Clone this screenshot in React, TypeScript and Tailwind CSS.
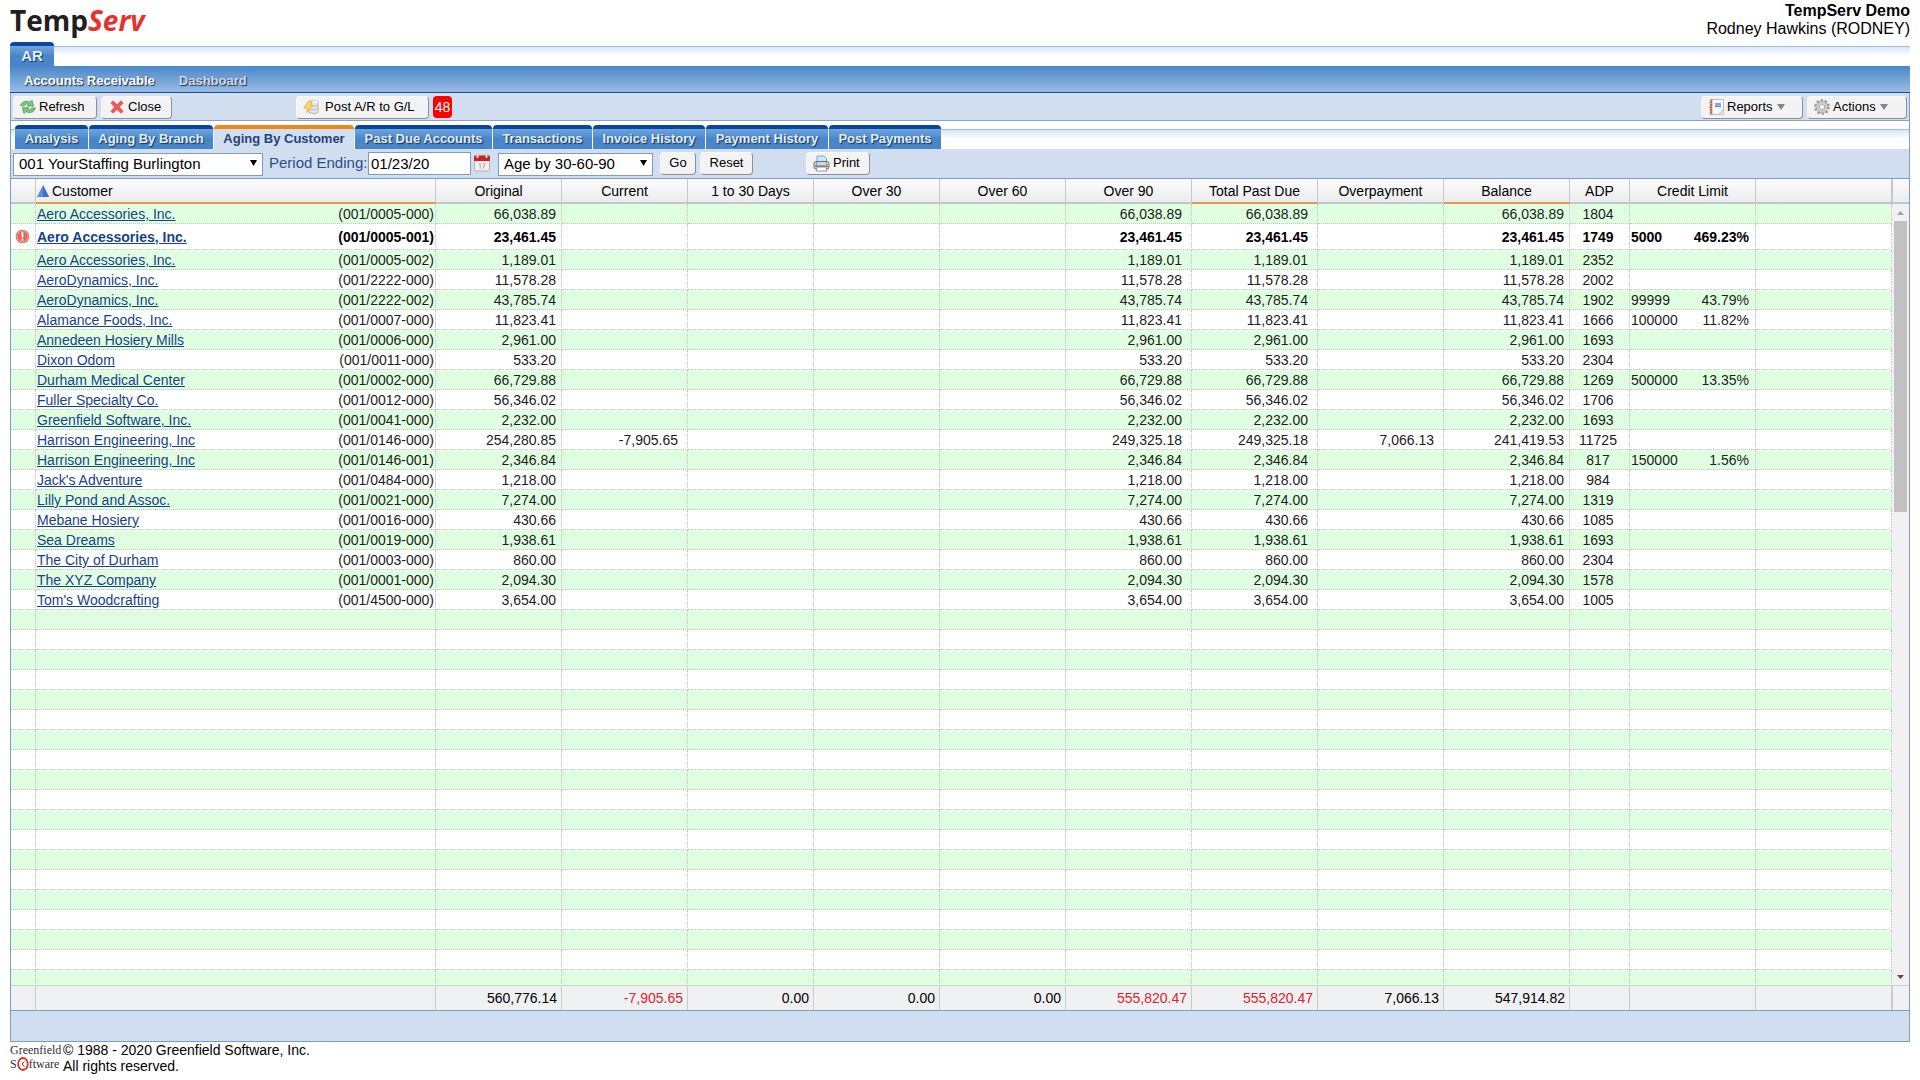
import React, { useState } from "react";

interface Customer {
  name: string;
  code: string;
  original: string;
  current?: string;
  over90: string;
  pastDue: string;
  overpayment?: string;
  balance: string;
  adp: string;
  limit?: string;
  percent?: string;
  alert?: boolean;
}

// most customers have everything sitting in the over 90 bucket
const simple = (
  name: string,
  code: string,
  amount: string,
  adp: string,
  limit?: string,
  percent?: string
): Customer => ({
  name,
  code,
  original: amount,
  over90: amount,
  pastDue: amount,
  balance: amount,
  adp,
  limit,
  percent,
});

const customers: Customer[] = [
  simple("Aero Accessories, Inc.", "001/0005-000", "66,038.89", "1804"),
  {
    ...simple("Aero Accessories, Inc.", "001/0005-001", "23,461.45", "1749", "5000", "469.23%"),
    alert: true,
  },
  simple("Aero Accessories, Inc.", "001/0005-002", "1,189.01", "2352"),
  simple("AeroDynamics, Inc.", "001/2222-000", "11,578.28", "2002"),
  simple("AeroDynamics, Inc.", "001/2222-002", "43,785.74", "1902", "99999", "43.79%"),
  simple("Alamance Foods, Inc.", "001/0007-000", "11,823.41", "1666", "100000", "11.82%"),
  simple("Annedeen Hosiery Mills", "001/0006-000", "2,961.00", "1693"),
  simple("Dixon Odom", "001/0011-000", "533.20", "2304"),
  simple("Durham Medical Center", "001/0002-000", "66,729.88", "1269", "500000", "13.35%"),
  simple("Fuller Specialty Co.", "001/0012-000", "56,346.02", "1706"),
  simple("Greenfield Software, Inc.", "001/0041-000", "2,232.00", "1693"),
  {
    name: "Harrison Engineering, Inc",
    code: "001/0146-000",
    original: "254,280.85",
    current: "-7,905.65",
    over90: "249,325.18",
    pastDue: "249,325.18",
    overpayment: "7,066.13",
    balance: "241,419.53",
    adp: "11725",
  },
  simple("Harrison Engineering, Inc", "001/0146-001", "2,346.84", "817", "150000", "1.56%"),
  simple("Jack's Adventure", "001/0484-000", "1,218.00", "984"),
  simple("Lilly Pond and Assoc.", "001/0021-000", "7,274.00", "1319"),
  simple("Mebane Hosiery", "001/0016-000", "430.66", "1085"),
  simple("Sea Dreams", "001/0019-000", "1,938.61", "1693"),
  simple("The City of Durham", "001/0003-000", "860.00", "2304"),
  simple("The XYZ Company", "001/0001-000", "2,094.30", "1578"),
  simple("Tom's Woodcrafting", "001/4500-000", "3,654.00", "1005"),
];

const tabs = [
  { label: "Analysis", width: "w-[73px]" },
  { label: "Aging By Branch", width: "w-[124px]" },
  { label: "Aging By Customer", width: "w-[140px]" },
  { label: "Past Due Accounts", width: "w-[137px]" },
  { label: "Transactions", width: "w-[99px]" },
  { label: "Invoice History", width: "w-[112px]" },
  { label: "Payment History", width: "w-[122px]" },
  { label: "Post Payments", width: "w-[112px]" },
];

const headers = [
  { label: "Original" },
  { label: "Current" },
  { label: "1 to 30 Days" },
  { label: "Over 30" },
  { label: "Over 60" },
  { label: "Over 90" },
  { label: "Total Past Due", marked: true },
  { label: "Overpayment" },
  { label: "Balance", marked: true },
  { label: "ADP" },
  { label: "Credit Limit" },
];

const totals = [
  "560,776.14",
  "-7,905.65",
  "0.00",
  "0.00",
  "0.00",
  "555,820.47",
  "555,820.47",
  "7,066.13",
  "547,914.82",
];
const redTotals = [1, 5, 6];

const RefreshIcon = () => (
  <svg viewBox="0 0 16 16" className="h-4 w-4 shrink-0">
    <path
      d="M.6 6.800C1.200 2.800 6.500 1 10 3.200L12 1.200 13.600 7.200 7 7 8.700 5.200C7 4.400 4.900 5 4.300 6.800z"
      fill="#7cc67c"
      stroke="#3f9448"
      strokeWidth=".7"
    />
    <path
      d="M15.400 9C14.800 13 9.500 14.800 6 12.600L4 14.600 2.400 8.600 9 8.800 7.300 10.600C9 11.400 11.100 10.800 11.700 9z"
      fill="#7cc67c"
      stroke="#3f9448"
      strokeWidth=".7"
    />
  </svg>
);

const CloseIcon = () => (
  <svg viewBox="0 0 14 14" className="h-[14px] w-[14px] shrink-0">
    <path
      d="M3 .8 7 4.600 11 .8 13.200 3 9.400 7l3.800 4.200-2.200 2L7 9.500l-4 3.700-2.200-2L4.600 7 .8 3z"
      fill="#f05a5a"
      stroke="#d93a3a"
      strokeWidth=".6"
    />
  </svg>
);

const PostIcon = () => (
  <svg viewBox="0 0 16 16" className="h-4 w-4 shrink-0">
    <path d="M6 2.500C8 .8 13.500.8 15 2.500v10.800C13.500 15 8 15 6 13.300z" fill="#e2e3e4" stroke="#a8a8a8" strokeWidth=".8" />
    <path d="M6 6c2 1.400 7 1.400 9 0M6 9.700c2 1.400 7 1.400 9 0" fill="none" stroke="#b4b4b4" strokeWidth=".8" />
    <ellipse cx="10.500" cy="2.900" rx="4.300" ry="1.400" fill="#fafafa" />
    <path d="M5 2.500h4.500L7.600 6.200H10L3.300 14l1.400-5H.8z" fill="#f9d566" stroke="#dfa940" strokeWidth=".7" />
  </svg>
);

const CalendarIcon = () => (
  <svg viewBox="0 0 18 18" className="h-[18px] w-[18px]">
    <rect x="1.500" y="2" width="15" height="15" rx="1" fill="#f3f1f0" stroke="#b9b0b0" />
    <path d="M1 7V3q0-1.500 1.500-1.500h13Q17 1.500 17 3v4z" fill="#cf2027" />
    <rect x="3.500" y="0" width="2" height="4" rx="1" fill="#f4f4f4" stroke="#999" strokeWidth=".5" />
    <rect x="12.500" y="0" width="2" height="4" rx="1" fill="#f4f4f4" stroke="#999" strokeWidth=".5" />
    <path d="M6 10.500l1.200-.8v5M9.500 9.800H12L10.300 14.600" fill="none" stroke="#b0a9a9" strokeWidth="1" />
  </svg>
);

const PrinterIcon = () => (
  <svg viewBox="0 0 17 17" className="h-[17px] w-[17px] shrink-0">
    <path d="M4 7V1h7l2.500 2.500V7z" fill="#cfe5fb" stroke="#6c94bd" strokeWidth=".8" />
    <rect x="1" y="6.500" width="15" height="7.500" rx="2" fill="#d4d6d8" stroke="#5f6469" strokeWidth=".9" />
    <path d="M3.500 6.500v4M13.500 6.500v4" stroke="#83888d" strokeWidth=".8" />
    <rect x="2" y="10.500" width="13" height="1.200" fill="#63686d" />
    <path d="M4 12h9l.8 4H3.200z" fill="#fff" stroke="#7c8186" strokeWidth=".8" />
  </svg>
);

const ReportIcon = () => (
  <svg viewBox="0 0 15 16" className="h-4 w-[15px] shrink-0">
    <path d="M2.500.5h12v10l-5 5h-7z" fill="#fbfbfc" stroke="#a9adb3" strokeWidth=".8" />
    <path d="M9.500 15.500h5v-5z" fill="#e8eaee" stroke="#a9adb3" strokeWidth=".6" />
    <rect x="1" y=".5" width="2.300" height="15" fill="#b5694a" />
    <path d="M0 2h2.500M0 4.500h2.500M0 7h2.500M0 9.500h2.500M0 12h2.500M0 14.500h2.500" stroke="#d8b9a9" strokeWidth="1" />
    <path d="M6 5h6M6 7.200h6" stroke="#4d86d6" strokeWidth="1.500" />
  </svg>
);

const GearIcon = () => (
  <svg viewBox="0 0 16 16" className="h-4 w-4 shrink-0">
    <circle cx="8" cy="8" r="6.400" fill="none" stroke="#8f8f8f" strokeWidth="2.800" strokeDasharray="2.010 2.010" />
    <circle cx="8" cy="8" r="4.200" fill="none" stroke="#a3a3a3" strokeWidth="4" />
    <circle cx="8" cy="8" r="4.200" fill="none" stroke="#cbcbcb" strokeWidth="2.800" />
  </svg>
);

const AlertIcon = () => (
  <svg viewBox="0 0 16 16" className="h-[15px] w-[15px]">
    <circle cx="8" cy="8" r="7.300" fill="#d9564a" />
    <circle cx="8" cy="8" r="6" fill="#e4695c" stroke="#f6c3bc" strokeWidth=".9" />
    <path d="M8 3.500v5.500M8 10.500v2" stroke="#fff" strokeWidth="1.900" />
  </svg>
);

const Arrow = ({ className, up }: { className: string; up?: boolean }) => (
  <svg viewBox="0 0 8 6" preserveAspectRatio="none" className={className}>
    <path d={up ? "M4 0 8 6H0z" : "M0 0h8L4 6z"} fill="currentColor" />
  </svg>
);

const Button = ({ className = "", children }: { className?: string; children: React.ReactNode }) => (
  <button
    type="button"
    className={`flex h-[23px] items-center whitespace-nowrap rounded border border-t-[#f8f8f8] border-l-[#f8f8f8] border-r-[#8d9095] border-b-[#8d9095] bg-[#f3f3f3] pb-px text-[13px] text-black ${className}`}
  >
    {children}
  </button>
);

const Select = ({ label, value, className }: { label: string; value: string; className: string }) => (
  <div className={`relative ${className}`}>
    <select
      aria-label={label}
      className="h-[23px] w-full appearance-none border border-[#7f9db9] bg-white pb-px pl-[5px] text-[15px] leading-5 text-black"
    >
      <option>{value}</option>
    </select>
    <Arrow className="pointer-events-none absolute top-2 right-[6px] h-[6px] w-[7px] text-black" />
  </div>
);

const stripClass =
  "flex h-6 bg-[linear-gradient(to_bottom,#ffffff_4px,#9dbfe2_4px,#9dbfe2_5px,#d9e7f6_5px,#ffffff_14px)]";
const tabClass =
  "h-6 whitespace-nowrap rounded-t border-t-4 border-[#0a469b] bg-linear-to-b from-[#70a5de] to-[#4886c9] to-50% font-bold text-[#e4edf8] [text-shadow:1px_1px_1px_#10305c]";
const activeTabClass =
  "h-6 whitespace-nowrap rounded-t border-t-4 border-[#f08519] bg-[#d1deef] font-bold text-[#24427c]";

const Columns = () => (
  <colgroup>
    <col className="w-[25px]" />
    <col className="w-[400px]" />
    {totals.map((_, index) => (
      <col key={index} className="w-[126px]" />
    ))}
    <col className="w-[60px]" />
    <col className="w-[126px]" />
    <col />
  </colgroup>
);

const tableClass = "w-full table-fixed border-separate border-spacing-0 text-sm";
const headClass = "h-[25px] border-r border-b-2 border-r-[#c5c8cc] p-0 font-normal";
const cellClass = "border-r border-b border-dotted border-[#c4c8c4] p-0";
const textCellClass = `${cellClass} pt-px`;
const totalClass = "h-6 border-r border-[#c9cbce] p-0 pr-1 text-right";

const CustomerRow = ({ customer, green }: { customer: Customer; green: boolean }) => (
  <tr
    className={`${green ? "bg-[#e0ffe0]" : "bg-white"} ${
      customer.alert ? "h-[26px] font-bold text-black" : "h-5 text-[#1c1c1c]"
    } leading-[18px]`}
  >
    <td className={`${cellClass} pl-1`}>{customer.alert && <AlertIcon />}</td>
    <td className={`${textCellClass} px-px`}>
      <div className="flex justify-between">
        <a href="#customer" className="text-[#15428b] underline">
          {customer.name}
        </a>
        <span>({customer.code})</span>
      </div>
    </td>
    <td className={`${textCellClass} pr-[5px] text-right`}>{customer.original}</td>
    <td className={`${textCellClass} pr-[9px] text-right`}>{customer.current}</td>
    <td className={cellClass}></td>
    <td className={cellClass}></td>
    <td className={cellClass}></td>
    <td className={`${textCellClass} pr-[9px] text-right`}>{customer.over90}</td>
    <td className={`${textCellClass} pr-[9px] text-right`}>{customer.pastDue}</td>
    <td className={`${textCellClass} pr-[9px] text-right`}>{customer.overpayment}</td>
    <td className={`${textCellClass} pr-[5px] text-right`}>{customer.balance}</td>
    <td className={`${textCellClass} pr-[3px] text-center`}>{customer.adp}</td>
    <td className={`${textCellClass} pr-[6px] pl-px`}>
      <div className="flex justify-between">
        <span>{customer.limit}</span>
        <span>{customer.percent}</span>
      </div>
    </td>
    <td className={cellClass}></td>
  </tr>
);

const App = () => {
  const [activeTab, setActiveTab] = useState("Aging By Customer");
  const [period, setPeriod] = useState("01/23/20");
  const emptyRows = Array.from({ length: 19 });

  return (
    <div className="flex h-screen flex-col bg-white px-[10px] font-['Liberation_Sans',Arial,sans-serif] text-black">
      <header className="flex h-[42px] shrink-0 justify-between">
        <h1 className="font-['Open_Sans','Liberation_Sans',sans-serif] text-[28px] leading-10 font-bold text-[#231f20]">
          Temp<span className="text-[#e8312a] italic">Serv</span>
        </h1>
        <div className="pt-[2px] text-right text-base leading-[18px]">
          <div className="font-bold">TempServ Demo</div>
          <div>Rodney Hawkins (RODNEY)</div>
        </div>
      </header>

      <div className={`${stripClass} shrink-0`}>
        <button type="button" className={`${tabClass} w-11 text-[15px] leading-5`}>
          AR
        </button>
      </div>
      <nav className="flex h-[27px] shrink-0 items-center gap-6 border-b border-[#1b4b8a] bg-linear-to-b from-[#4a87ca] to-[#98bbe4] px-[14px] pt-[3px] text-[13px] font-bold">
        <a href="#receivable" className="text-white [text-shadow:1px_1px_1px_#10305c]">
          Accounts Receivable
        </a>
        <a href="#dashboard" className="text-[#d3d8de] [text-shadow:1px_1px_1px_#10305c]">
          Dashboard
        </a>
      </nav>

      <main className="flex min-h-0 flex-1 flex-col border-x border-b border-[#7f9bc8] bg-[#d1deef]">
        <div className="flex h-7 shrink-0 items-start justify-between border-b border-[#8aa3cb] px-[2px] pt-[3px]">
          <div className="flex gap-1">
            <Button className="w-[84px] gap-[3px] pl-[6px]">
              <RefreshIcon />
              Refresh
            </Button>
            <Button className="w-[71px] gap-1 pl-2">
              <CloseIcon />
              Close
            </Button>
            <Button className="ml-[120px] w-[133px] gap-[6px] pl-[6px]">
              <PostIcon />
              Post A/R to G/L
            </Button>
            <span className="h-[22px] w-[19px] rounded bg-[#fe0000] text-center text-sm leading-[22px] text-white">
              48
            </span>
          </div>
          <div className="flex gap-1">
            <Button className="w-[102px] gap-[3px] pl-[7px]">
              <ReportIcon />
              Reports
              <Arrow className="ml-px h-[6px] w-2 text-[#858585]" />
            </Button>
            <Button className="w-[100px] gap-[3px] pl-[6px]">
              <GearIcon />
              Actions
              <Arrow className="ml-px h-[6px] w-2 text-[#858585]" />
            </Button>
          </div>
        </div>

        <div className="shrink-0 bg-white pt-1">
          <div className={`${stripClass} gap-px pl-1`} role="tablist">
            {tabs.map((tab) => (
              <button
                key={tab.label}
                type="button"
                role="tab"
                aria-selected={tab.label === activeTab}
                onClick={() => setActiveTab(tab.label)}
                className={`${tab.label === activeTab ? activeTabClass : tabClass} ${tab.width} text-[13px] leading-5`}
              >
                {tab.label}
              </button>
            ))}
          </div>
        </div>

        <div className="flex h-[30px] shrink-0 items-center border-b border-[#7f9bc8] px-[2px]">
          <Select label="Branch" value="001 YourStaffing Burlington" className="w-[250px]" />
          <label htmlFor="period" className="ml-[6px] w-[99px] pb-px text-[15px] text-[#2c4c8c]">
            Period Ending:
          </label>
          <input
            id="period"
            value={period}
            onChange={(e) => setPeriod(e.target.value)}
            className="h-[23px] w-[103px] border border-[#7f9db9] bg-white pb-px pl-[2px] text-[15px]"
          />
          <button type="button" aria-label="Pick a date" className="mx-[2px] pb-[2px]">
            <CalendarIcon />
          </button>
          <Select label="Aging" value="Age by 30-60-90" className="ml-[5px] w-[155px]" />
          <Button className="ml-[7px] w-9 justify-center">Go</Button>
          <Button className="ml-1 w-[53px] justify-center">Reset</Button>
          <Button className="ml-[53px] w-16 gap-[3px] pl-[6px]">
            <PrinterIcon />
            Print
          </Button>
        </div>

        <div className="flex shrink-0 bg-linear-to-b from-[#fbfbfb] to-[#eaebed]">
          <table className={tableClass}>
            <Columns />
            <thead>
              <tr>
                <td className={`${headClass} border-b-[#c3c6c9]`}></td>
                <th className={`${headClass} border-b-[#e8944a] text-left`}>
                  <div className="flex items-center gap-[3px] pl-px">
                    <svg viewBox="0 0 12 12" className="h-3 w-3">
                      <path d="M6 0 12 12H0z" fill="#5b8ee0" />
                      <path d="M6 0 12 12H6z" fill="#3f6fc4" />
                    </svg>
                    Customer
                  </div>
                </th>
                {headers.map((header) => (
                  <th
                    key={header.label}
                    className={`${headClass} ${header.marked ? "border-b-[#e8944a]" : "border-b-[#c3c6c9]"}`}
                  >
                    {header.label}
                  </th>
                ))}
                <td className={`${headClass} border-b-[#c3c6c9]`}></td>
              </tr>
            </thead>
          </table>
          <div className="w-[17px] shrink-0 border-b-2 border-l border-[#c3c6c9]"></div>
        </div>

        <div className="flex min-h-0 flex-1 overflow-hidden bg-white">
          <div className="min-w-0 flex-1">
            <table className={tableClass}>
              <Columns />
              <tbody>
                {customers.map((customer, index) => (
                  <CustomerRow key={customer.code} customer={customer} green={index % 2 === 0} />
                ))}
                {emptyRows.map((_, row) => (
                  <tr key={row} className={`h-5 ${row % 2 === 0 ? "bg-[#e0ffe0]" : "bg-white"}`}>
                    {Array.from({ length: 14 }).map((_, cell) => (
                      <td key={cell} className={cellClass}></td>
                    ))}
                  </tr>
                ))}
              </tbody>
            </table>
          </div>
          <div className="flex w-[17px] shrink-0 flex-col bg-[#f1f1f1]">
            <div className="flex h-[17px] items-center justify-center">
              <Arrow up className="h-1 w-[7px] text-[#a3a3a3]" />
            </div>
            <div className="min-h-0 flex-1 px-[2px]">
              <div className="h-[39%] bg-[#c1c1c1]"></div>
            </div>
            <div className="flex h-[17px] items-center justify-center">
              <Arrow className="h-1 w-[7px] text-[#505050]" />
            </div>
          </div>
        </div>

        <div className="flex shrink-0 border-t border-b border-t-[#cfd1d3] border-b-[#7f9bc8] bg-[#f0f1f3]">
          <table className={tableClass}>
            <Columns />
            <tbody>
              <tr>
                <td className={totalClass}></td>
                <td className={totalClass}></td>
                {totals.map((total, index) => (
                  <td
                    key={index}
                    className={`${totalClass} ${redTotals.includes(index) ? "text-[#e0202c]" : ""}`}
                  >
                    {total}
                  </td>
                ))}
                <td className={totalClass}></td>
                <td className={totalClass}></td>
                <td className={totalClass}></td>
              </tr>
            </tbody>
          </table>
          <div className="w-[17px] shrink-0 border-l border-[#c9cbce]"></div>
        </div>
        <div className="h-[30px] shrink-0"></div>
      </main>

      <footer className="flex h-[38px] shrink-0 gap-[2px] text-sm leading-4">
        <div className="w-[51px] pt-px font-['Liberation_Serif',serif] text-xs leading-[14px] text-[#333]">
          <div>Greenfield</div>
          <div className="flex items-center">
            S
            <svg viewBox="0 0 12 14" className="h-[14px] w-3">
              <ellipse cx="6" cy="7" rx="4.800" ry="6" fill="#fff" stroke="#e03028" strokeWidth="1.800" />
              <path d="M7.500 4.500 5 7l2.500 2.500" fill="none" stroke="#444" />
            </svg>
            ftware
          </div>
        </div>
        <p>
          © 1988 - 2020 Greenfield Software, Inc.
          <br />
          All rights reserved.
        </p>
      </footer>
    </div>
  );
};

export default App;
